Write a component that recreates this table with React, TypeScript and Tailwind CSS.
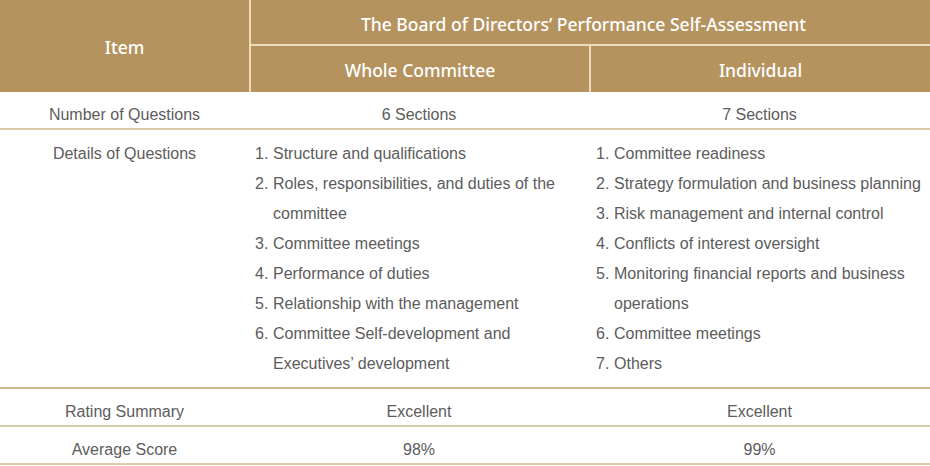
import React from "react";

// table data
const wholeItems = [
	"Structure and qualifications",
	"Roles, responsibilities, and duties of the committee",
	"Committee meetings",
	"Performance of duties",
	"Relationship with the management",
	"Committee Self-development and Executives’ development",
];

const individualItems = [
	"Committee readiness",
	"Strategy formulation and business planning",
	"Risk management and internal control",
	"Conflicts of interest oversight",
	"Monitoring financial reports and business operations",
	"Committee meetings",
	"Others",
];

const body = "font-['Liberation_Sans',Arial,sans-serif] text-[16px] text-[#5c5c5c]";

// numbered list with hanging indent
const NumberedList = ({ items }: { items: string[] }) => (
	<div className="flex flex-col">
		{items.map((item, i) => (
			<div key={i} className="flex leading-[30px]">
				<span className="w-[18px] shrink-0">{i + 1}.</span>
				<span>{item}</span>
			</div>
		))}
	</div>
);

// simple one-line body row
const Row = ({ label, a, b }: { label: string; a: string; b: string }) => (
	<div className={`flex h-[38px] items-center pt-[9px] border-b-2 border-[#dccbab] ${body}`}>
		<div className="w-[249px] text-center">{label}</div>
		<div className="w-[340px] text-center">{a}</div>
		<div className="flex-1 text-center">{b}</div>
	</div>
);

export default function App() {
	return (
		<div className="w-[930px] h-[466px] bg-white">
			{/* header */}
			<div className="flex h-[92px] bg-[#b5935f] text-white font-['Noto_Sans',sans-serif] font-medium text-[17.5px]">
				<div className="w-[249px] flex items-center justify-center pt-[2px]">Item</div>
				<div className="flex-1 flex flex-col border-l-2 border-[#ecdcbc]">
					<div className="h-[46px] flex items-center justify-center pt-[4px] pr-[14px] border-b-2 border-[#ecdcbc]">
						The Board of Directors’ Performance Self-Assessment
					</div>
					<div className="flex flex-1">
						<div className="w-[338px] flex items-center justify-center pt-[2px]">Whole Committee</div>
						<div className="flex-1 flex items-center justify-center pt-[2px] border-l-2 border-[#ecdcbc]">
							Individual
						</div>
					</div>
				</div>
			</div>

			<Row label="Number of Questions" a="6 Sections" b="7 Sections" />

			{/* details of questions */}
			<div className={`flex h-[259px] pt-[9px] border-b-2 border-[#cdb892] ${body}`}>
				<div className="w-[249px] text-center leading-[30px]">Details of Questions</div>
				<div className="w-[340px] pl-[6px] pr-[6px]">
					<NumberedList items={wholeItems} />
				</div>
				<div className="flex-1 pl-[7px] pr-[2px]">
					<NumberedList items={individualItems} />
				</div>
			</div>

			<Row label="Rating Summary" a="Excellent" b="Excellent" />
			<Row label="Average Score" a="98%" b="99%" />
		</div>
	);
}
